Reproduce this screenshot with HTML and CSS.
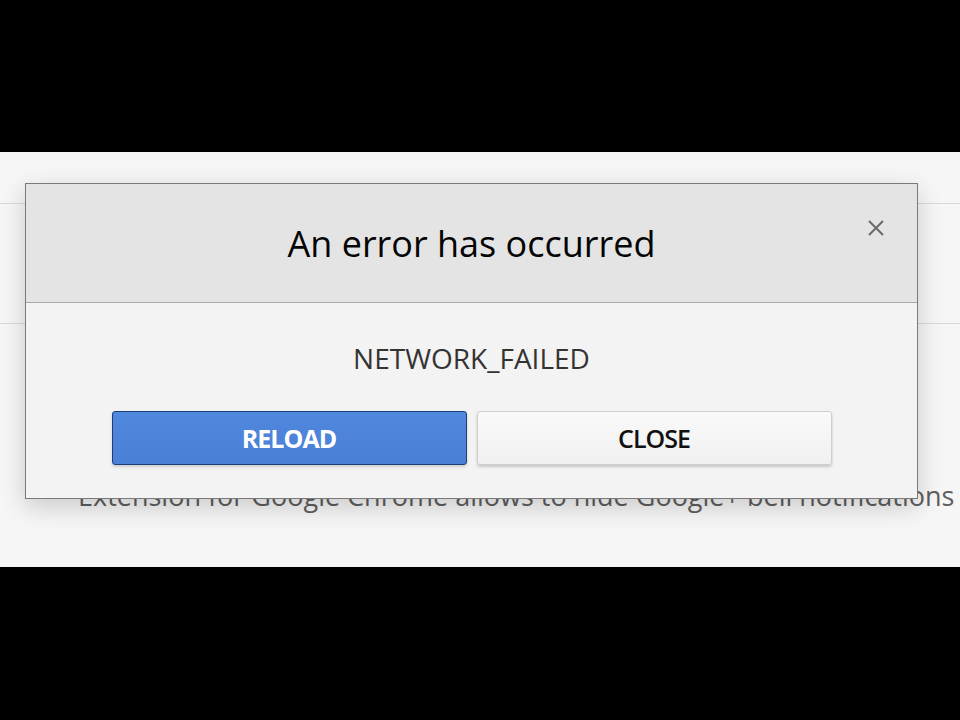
FILE: index.html
```html
<!DOCTYPE html>
<html lang="en">
<head>
<meta charset="utf-8">
<title>An error has occurred</title>
<link rel="stylesheet" href="styles.css">
</head>
<body>
<div class="screen">
  <div class="band-top"></div>
  <div class="page">
    <div class="page-bar"></div>
    <div class="page-strip"></div>
    <p class="page-text">Extension for Google Chrome allows to hide Google+ bell notifications</p>
    <div class="dialog">
      <div class="dialog-header">
        <h1 class="dialog-title">An error has occurred</h1>
        <span class="dialog-close" aria-label="Close">
          <svg width="18" height="18" viewBox="0 0 18 18"><path d="M2 2 L16 16 M16 2 L2 16" stroke="#6a6a6a" stroke-width="2" fill="none"/></svg>
        </span>
      </div>
      <div class="dialog-body">
        <p class="dialog-message">NETWORK_FAILED</p>
        <div class="dialog-actions">
          <button class="btn btn-primary">RELOAD</button>
          <button class="btn btn-secondary">CLOSE</button>
        </div>
      </div>
    </div>
  </div>
  <div class="band-bottom"></div>
</div>
</body>
</html>
```
FILE: styles.css
```css
html, body {
  margin: 0;
  padding: 0;
  background: #000;
}
.screen {
  width: 960px;
  height: 720px;
  display: flex;
  flex-direction: column;
  font-family: "Open Sans", "Noto Sans", sans-serif;
}
.band-top {
  height: 152px;
  background: #000;
}
.page {
  position: relative;
  height: 415px;
  background: #f6f6f6;
  overflow: hidden;
}
.band-bottom {
  flex: 1;
  background: #000;
}
.page-bar {
  height: 51px;
  border-bottom: 1px solid #d8d8d8;
}
.page-strip {
  height: 119px;
  border-bottom: 1px solid #d8d8d8;
}
.page-text {
  margin: 156px 0 0 78px;
  font-size: 27px;
  line-height: 32px;
  color: #5e5e5e;
  white-space: nowrap;
}
.dialog {
  position: absolute;
  left: 25px;
  top: 31px;
  width: 893px;
  height: 316px;
  box-sizing: border-box;
  border: 1px solid #7a7a7a;
  background: #f3f3f3;
  box-shadow: 0 8px 24px rgba(0,0,0,0.18);
  display: flex;
  flex-direction: column;
}
.dialog-header {
  position: relative;
  height: 118px;
  background: #e4e4e4;
  border-bottom: 1px solid #a9a9a9;
  display: flex;
  align-items: center;
  justify-content: center;
}
.dialog-title {
  margin: 0;
  font-size: 36px;
  font-weight: 500;
  color: #050505;
}
.dialog-close {
  position: absolute;
  right: 32px;
  top: 35px;
  width: 18px;
  height: 18px;
  display: flex;
}
.dialog-body {
  flex: 1;
  display: flex;
  flex-direction: column;
  align-items: center;
}
.dialog-message {
  margin: 36px 0 0;
  font-size: 28px;
  line-height: 38px;
  color: #333;
}
.dialog-actions {
  margin-top: 34px;
  display: flex;
  gap: 10px;
}
.btn {
  width: 355px;
  height: 54px;
  border-radius: 3px;
  font-family: "Open Sans", "Noto Sans", sans-serif;
  font-size: 25px;
  font-weight: 700;
  letter-spacing: -1px;
  cursor: pointer;
}
.btn-primary {
  background: linear-gradient(#5088de, #4a7fd6);
  border: 1px solid #1d3f78;
  color: #fff;
  box-shadow: 0 2px 3px rgba(0,0,0,0.15);
}
.btn-secondary {
  background: linear-gradient(#fafafa, #f0f0f0);
  border: 1px solid #cfcfcf;
  color: #111;
  font-weight: 600;
  box-shadow: 0 2px 3px rgba(0,0,0,0.18);
}
```
